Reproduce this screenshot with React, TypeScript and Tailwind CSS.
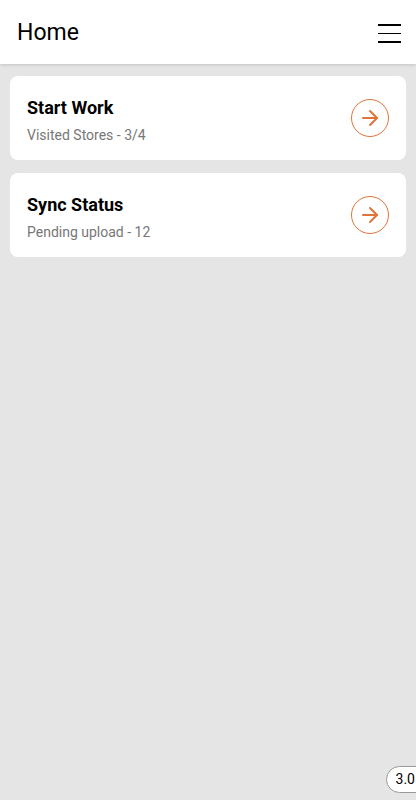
import { ArrowRight } from "lucide-react";

const cards = [
  { title: "Start Work", subtitle: "Visited Stores - 3/4" },
  { title: "Sync Status", subtitle: "Pending upload - 12" },
];

export default function App() {
  return (
    <div
      className="relative min-h-[800px] w-full overflow-hidden bg-[#e5e5e5]"
      style={{ fontFamily: "Roboto, 'Noto Sans', sans-serif" }}
    >
      {/* Header */}
      <header className="flex h-16 items-center justify-between bg-white pl-[17px] pr-[15px] pt-[3px] shadow-[0_1px_3px_rgba(0,0,0,0.15)]">
        <h1 className="text-[23px] font-normal text-black">Home</h1>
        <button aria-label="Menu" className="flex w-[23px] flex-col gap-[7px]">
          <span className="block h-[1.5px] w-full bg-black" />
          <span className="block h-[1.5px] w-full bg-black" />
          <span className="block h-[1.5px] w-full bg-black" />
        </button>
      </header>

      {/* Cards */}
      <main className="flex flex-col gap-[13px] px-[10px] pt-3">
        {cards.map((card) => (
          <div
            key={card.title}
            className="flex h-[84px] items-center justify-between rounded-lg bg-white pl-[17px] pr-[17px]"
          >
            <div className="flex flex-col pt-[4px]">
              <span className="text-[18px] font-bold leading-6 text-black">
                {card.title}
              </span>
              <span className="mt-[5px] text-[14px] leading-5 text-[#777]">
                {card.subtitle}
              </span>
            </div>
            <div className="flex h-[38px] w-[38px] items-center justify-center rounded-full border border-[#e0743a]">
              <ArrowRight className="h-6 w-6 text-[#e0743a]" strokeWidth={2} />
            </div>
          </div>
        ))}
      </main>

      {/* Version badge */}
      <div className="absolute bottom-[7px] right-[-20px] flex h-[27px] items-center rounded-full border border-[#999] bg-white pl-[9px] pr-5 text-[14px] font-normal text-black">
        3.0
      </div>
    </div>
  );
}
